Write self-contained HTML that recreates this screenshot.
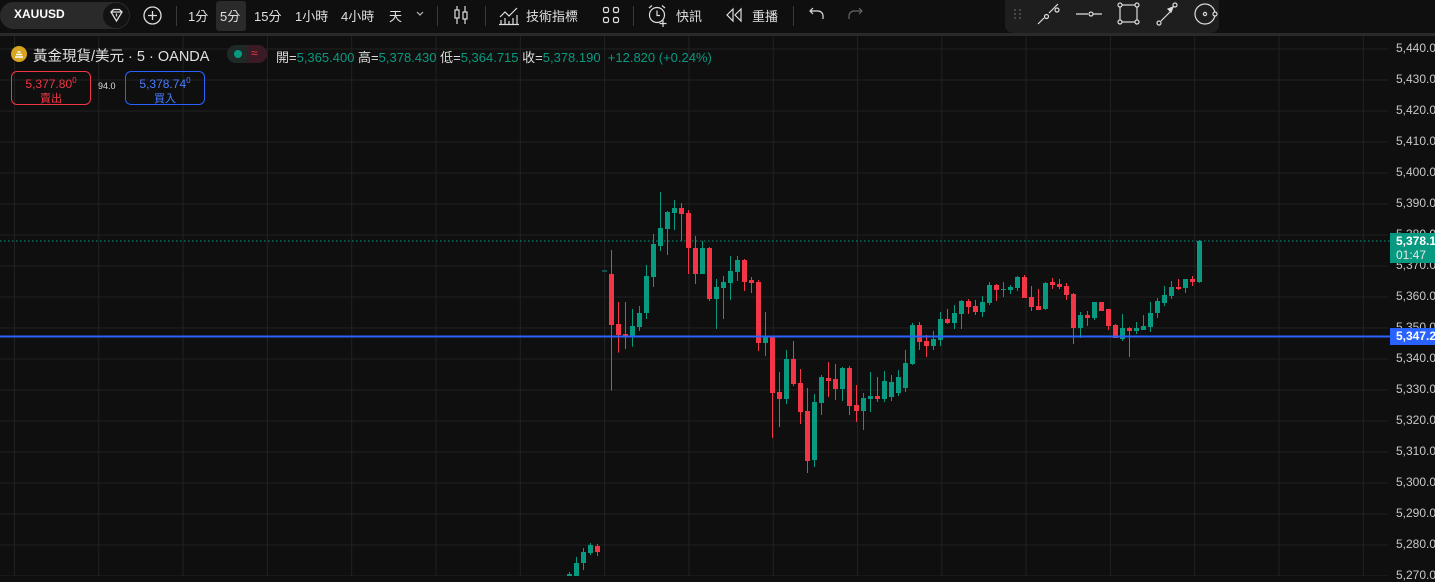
<!DOCTYPE html>
<html><head><meta charset="utf-8"><style>
*{margin:0;padding:0;box-sizing:border-box}
body{width:1435px;height:576px;background:#0f0f0f;overflow:hidden;position:relative;font-family:"Liberation Sans","Noto Sans CJK TC",sans-serif;color:#d1d4dc}
.top{position:absolute;left:0;top:0;width:1435px;height:33px;background:#0f0f0f}
.band{position:absolute;left:0;top:33px;width:1435px;height:3px;background:#2a2a2a}
.t{position:absolute;top:6px;font-size:13px;color:#e0e0e0;white-space:nowrap}
.sep{position:absolute;top:6px;width:1px;height:20px;background:#3a3a3a}
svg.i{position:absolute}
.ax{position:absolute;left:1396px;font-size:12px;color:#c8c8c8;white-space:nowrap}
</style></head><body>
<svg id="ch" style="position:absolute;left:0;top:0" width="1435" height="576"></svg>
<div class="top"></div>
<div class="band"></div>
<div style="position:absolute;left:0;top:2px;width:130px;height:27px;background:#2a2a2a;border-radius:14px"></div>
<div class="t" style="left:14px;top:7px;font-weight:bold;font-size:12px;color:#fff">XAUUSD</div>
<div style="position:absolute;left:103px;top:3px;width:26px;height:25px;border-radius:13px;background:#131313"></div>
<svg class="i" style="left:108px;top:7px" width="17" height="17" viewBox="0 0 17 17" fill="none" stroke="#ddd" stroke-width="1.3"><path d="M3 5l2.5-2.5h6L14 5l-5.5 9z M3 5h11 M8.5 6.5v3"/></svg>
<svg class="i" style="left:142px;top:5px" width="21" height="21" fill="none" stroke="#ddd" stroke-width="1.3"><circle cx="10.5" cy="10.5" r="8.5"/><path d="M10.5 6v9M6 10.5h9"/></svg>
<div class="sep" style="left:176px"></div>
<div class="t" style="left:188px">1分</div>
<div style="position:absolute;left:216px;top:1px;width:30px;height:30px;background:#2a2a2a;border-radius:3px"></div>
<div class="t" style="left:220px">5分</div>
<div class="t" style="left:254px">15分</div>
<div class="t" style="left:295px">1小時</div>
<div class="t" style="left:341px">4小時</div>
<div class="t" style="left:389px">天</div>
<svg class="i" style="left:414px;top:9px" width="12" height="10" fill="none" stroke="#bbb" stroke-width="1.2"><path d="M3 3l3 3 3-3"/></svg>
<div class="sep" style="left:437px"></div>
<svg class="i" style="left:452px;top:4px" width="18" height="22" fill="none" stroke="#ddd" stroke-width="1.2"><path d="M5 2v18M13 2v18"/><rect x="3" y="6" width="4" height="8" fill="#0f0f0f"/><rect x="11" y="8" width="4" height="7" fill="#0f0f0f"/></svg>
<div class="sep" style="left:485px"></div>
<svg class="i" style="left:498px;top:4px" width="22" height="22" fill="none" stroke="#ddd" stroke-width="1.2"><path d="M2 13l5-5 4 4 8-8"/><path d="M3 20v-4M7 20v-6M11 20v-3M15 20v-6M19 20v-9M1 20.5h20"/></svg>
<div class="t" style="left:526px">技術指標</div>
<svg class="i" style="left:602px;top:6px" width="18" height="18" fill="none" stroke="#ddd" stroke-width="1.2"><rect x="1.5" y="1.5" width="5" height="5" rx="1.5"/><rect x="11.5" y="1.5" width="5" height="5" rx="1.5"/><rect x="1.5" y="11.5" width="5" height="5" rx="1.5"/><rect x="11.5" y="11.5" width="5" height="5" rx="1.5"/></svg>
<div class="sep" style="left:633px"></div>
<svg class="i" style="left:646px;top:4px" width="24" height="24" fill="none" stroke="#ddd" stroke-width="1.2"><circle cx="11" cy="11" r="7.5"/><path d="M11 6.5v5h3M3 4l3-2.5M19 4l-3-2.5M17 16v7M13.5 19.5h7"/></svg>
<div class="t" style="left:676px">快訊</div>
<svg class="i" style="left:725px;top:7px" width="20" height="16" fill="none" stroke="#ddd" stroke-width="1.2"><path d="M8 2L2 8l6 6V2zM16 2l-6 6 6 6V2z"/></svg>
<div class="t" style="left:752px">重播</div>
<div class="sep" style="left:793px"></div>
<svg class="i" style="left:808px;top:6px" width="18" height="16" fill="none" stroke="#ddd" stroke-width="1.2"><path d="M5 2L2 5l3 3M2 5h8a5 5 0 0 1 5 5v3"/></svg>
<svg class="i" style="left:846px;top:6px" width="18" height="16" fill="none" stroke="#666" stroke-width="1.2"><path d="M13 2l3 3-3 3M16 5H8a5 5 0 0 0-5 5v3"/></svg>
<div style="position:absolute;left:1005px;top:0;width:214px;height:33px;background:#1e1e1e;border-radius:0 0 8px 8px"></div>
<svg class="i" style="left:1005px;top:0" width="214" height="33" fill="none" stroke="#ddd" stroke-width="1.2">
<g fill="#555" stroke="none"><circle cx="10" cy="10" r="1"/><circle cx="15" cy="10" r="1"/><circle cx="10" cy="14" r="1"/><circle cx="15" cy="14" r="1"/><circle cx="10" cy="18" r="1"/><circle cx="15" cy="18" r="1"/></g>
<path d="M33 24l6-6M44 13l5-5"/><circle cx="41.5" cy="16.5" r="2"/><circle cx="52" cy="10" r="2"/><path d="M49 8l4-4"/>
<path d="M71 14h12M88 14h9"/><circle cx="86" cy="14" r="2"/>
<rect x="115" y="5" width="17" height="17"/><circle cx="115" cy="5" r="2" fill="#1e1e1e"/><circle cx="132" cy="5" r="2" fill="#1e1e1e"/><circle cx="115" cy="22" r="2" fill="#1e1e1e"/><circle cx="132" cy="22" r="2" fill="#1e1e1e"/>
<path d="M156 21l10-10"/><circle cx="154" cy="23" r="2"/><circle cx="170" cy="5" r="2"/><path d="M163 9l5-2-2 5z" fill="#ddd"/>
<circle cx="200" cy="14" r="10"/><circle cx="200" cy="14" r="1.6"/><circle cx="210" cy="14" r="2" fill="#1e1e1e"/>
</svg>
<svg class="i" style="left:10px;top:45px" width="18" height="18"><circle cx="9" cy="9" r="8" fill="#d9a520"/><path d="M5 12h8M6 9.5h6M7.5 7h3" stroke="#fff" stroke-width="1.6"/></svg>
<div style="position:absolute;left:33px;top:45px;font-size:14.5px;color:#e0e0e0;white-space:nowrap">黃金現貨/美元 · 5 · OANDA</div>
<div style="position:absolute;left:227px;top:45px;width:40px;height:18px;border-radius:9px;background:#1f2a26"></div>
<div style="position:absolute;left:247px;top:45px;width:20px;height:18px;border-radius:0 9px 9px 0;background:#3a1a24"></div>
<div style="position:absolute;left:234px;top:50px;width:8px;height:8px;border-radius:4px;background:#089981"></div>
<div style="position:absolute;left:251px;top:46px;font-size:12px;color:#f23645">≈</div>
<div style="position:absolute;left:276px;top:47px;font-size:13px;color:#089981;white-space:nowrap"><span style="color:#ddd">開=</span>5,365.400 <span style="color:#ddd">高=</span>5,378.430 <span style="color:#ddd">低=</span>5,364.715 <span style="color:#ddd">收=</span>5,378.190 &nbsp;+12.820 (+0.24%)</div>
<div style="position:absolute;left:11px;top:71px;width:80px;height:34px;border:1px solid #f23645;border-radius:6px;color:#f23645;text-align:center;font-size:12px;line-height:14px;padding-top:2px">5,377.80<sup style="font-size:8px">0</sup><br><span style="font-size:11px">賣出</span></div>
<div style="position:absolute;left:98px;top:81px;font-size:9px;color:#ddd">94.0</div>
<div style="position:absolute;left:125px;top:71px;width:80px;height:34px;border:1px solid #2962ff;border-radius:6px;color:#4a7dff;text-align:center;font-size:12px;line-height:14px;padding-top:2px">5,378.74<sup style="font-size:8px">0</sup><br><span style="font-size:11px">買入</span></div>
<div id="axis"></div>
<div style="position:absolute;left:1390px;top:233px;width:45px;height:30px;background:#089981;color:#fff;font-size:12px;font-weight:bold;line-height:14px;padding:1px 0 0 6px">5,378.1<br><span style="font-weight:normal;color:#e8e8e8">01:47</span></div>
<div style="position:absolute;left:1390px;top:328px;width:45px;height:17px;background:#2962ff;color:#fff;font-size:12px;font-weight:bold;line-height:17px;padding-left:6px">5,347.2</div>
<script>
var s='',Y=function(p){return 49+(5440-p)*3.1};
for(var x=14.5;x<1389;x+=84.3)s+='<line x1="'+x.toFixed(1)+'" y1="36" x2="'+x.toFixed(1)+'" y2="576" stroke="#222" />';
var ax='';
for(var p=5440;p>=5270;p-=10){var y=Y(p);s+='<line x1="0" y1="'+y+'" x2="1388" y2="'+y+'" stroke="#222"/>';
ax+='<div class="ax" style="top:'+(y-8)+'px">'+(p+'').replace(/^(\d)/,'$1,')+'.0</div>';}
document.getElementById('axis').innerHTML=ax;
s+='<line x1="0" y1="241" x2="1390" y2="241" stroke="#089981" stroke-dasharray="1.5,2.5"/>';
var G='#089981',R='#f23645';
function cd(x,c,a,b,h,l){s+='<line x1="'+(x+.5)+'" y1="'+h+'" x2="'+(x+.5)+'" y2="'+l+'" stroke="'+c+'"/>';s+='<rect x="'+(x-2)+'" y="'+a+'" width="5" height="'+Math.max(1,b-a)+'" fill="'+c+'"/>';}
var A=[['r',282,435,210,632],['r',432,465,366,518],['r',462,471,366,507],['g',438,471,387,500],['g',399,441,378,453],['g',288,399,255,417],['g',192,291,162,321],['g',144,198,36,213],['g',96,147,93,225],['g',84,99,60,150],['r',84,102,69,183],['r',99,204,90,282],['r',204,282,168,312],['g',204,282,183,282],['r',204,357,201,363],['g',321,357,297,447],['g',306,324,288,417],['g',273,309,228,360],['g',240,276,228,303],['r',240,306,237,333],['r',300,309,291,339],['r',306,489,300,513],['g',468,489,396,528],['r',468,639,468,774],['r',636,657,576,741],['g',537,657,510,672],['r',537,612,483,618],['r',609,696,567,732],['r',693,843,624,879],['g',666,840,642,861],['g',591,669,585,705],['r',594,603,546,651],['r',597,627,552,660],['g',564,627,561,663],['r',564,678,558,705],['r',675,693,615,726],['g',654,693,639,750],['g',648,657,576,696],['r',648,657,591,666],['g',603,657,573,666]];
A.forEach(function(d,k){cd(611+7*k,d[0]=='g'?G:R,180+d[1]/3,180+d[2]/3,180+d[3]/3,180+d[4]/3)});
cd(611+7*40,G,382,397,375,401);cd(611+7*41,G,377,393,370,396);cd(611+7*42,G,363,388,350,392);
var B=[['g',285,402,279,405],['r',285,336,276,360],['r',333,348,315,381],['g',327,348,303,360],['g',267,330,246,348],['r',267,279,237,282],['g',249,279,225,297],['g',213,252,210,297],['r',213,231,207,252],['r',228,246,210,255],['g',216,246,198,261],['g',165,219,156,225],['r',165,180,162,213],['g',177,180,156,201],['g',171,180,165,192],['g',141,174,138,183],['r',141,204,135,204],['r',201,231,168,243],['r',228,240,177,240],['g',159,237,156,240],['r',156,165,144,177],['r',162,171,147,177],['r',168,195,159,210],['r',192,294,189,342],['g',255,294,246,324],['r',255,264,243,288],['g',216,264,216,270],['r',216,243,216,243],['r',237,288,237,300],['r',285,324,282,324],['g',294,327,252,333],['r',294,303,291,381],['g',294,303,276,312],['g',288,300,255,300],['g',249,291,216,306],['g',213,249,204,264],['g',195,219,168,228],['g',171,198,153,207],['r',171,177,147,180],['g',147,174,147,189],['r',147,156,138,168],['g',33,156,30,159]];
B.forEach(function(d,k){cd(611+7*(43+k),d[0]=='g'?G:R,230+d[1]/3,230+d[2]/3,230+d[3]/3,230+d[4]/3)});
cd(569,G,574,580,572,580);cd(576,G,563,580,557,580);cd(583,G,552,563,548,570);cd(590,G,545,553,543,555);cd(597,R,546,552,544,556);
s+='<line x1="602" y1="271" x2="607" y2="271" stroke="'+G+'"/>';
s+='<line x1="0" y1="336.5" x2="1390" y2="336.5" stroke="#2962ff" stroke-width="2"/>';
document.getElementById('ch').innerHTML=s;
</script>
</body></html>
